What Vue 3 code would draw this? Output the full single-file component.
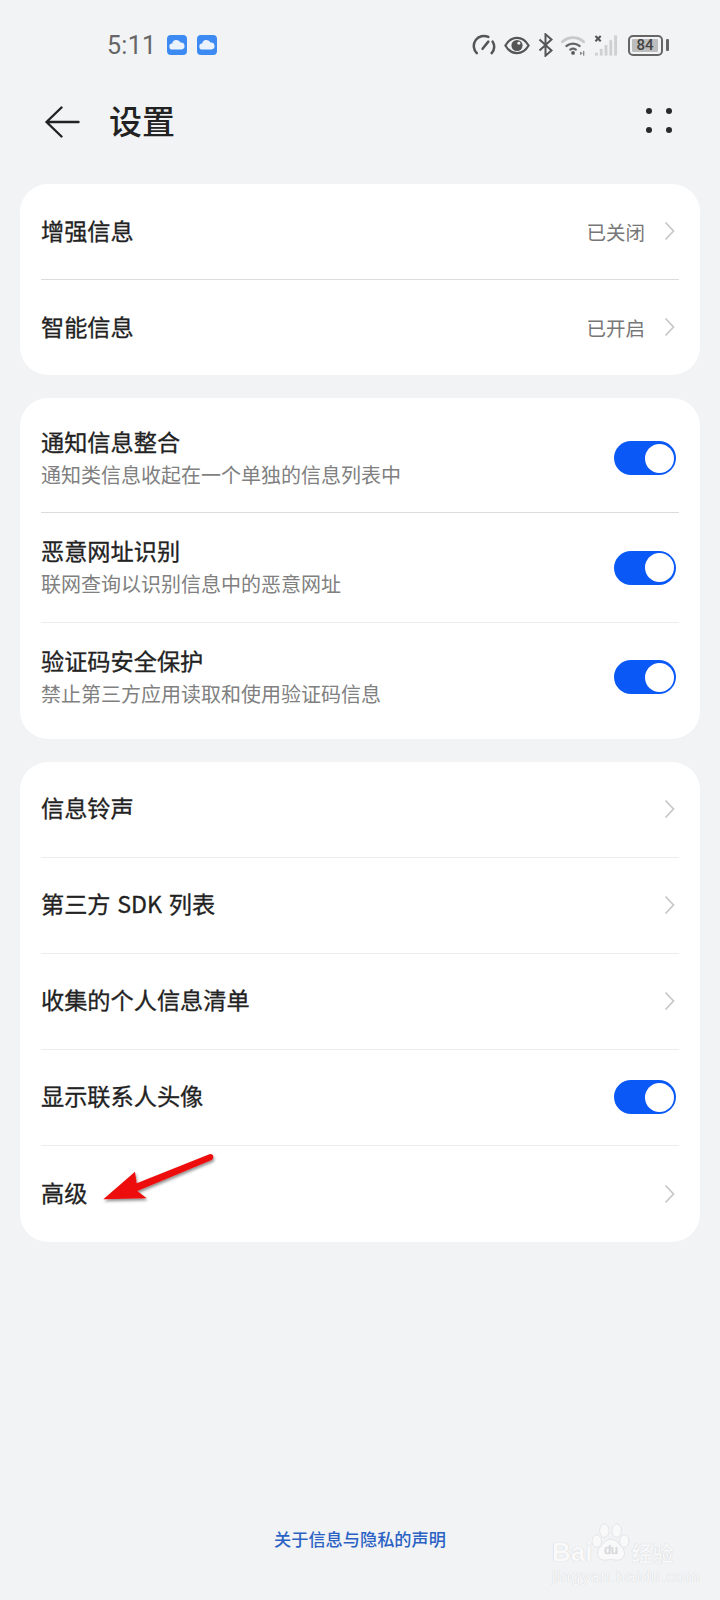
<script setup>
const basicRows = [
  { title: '增强信息', value: '已关闭' },
  { title: '智能信息', value: '已开启' },
]
const toggleRows = [
  { title: '通知信息整合', sub: '通知类信息收起在一个单独的信息列表中' },
  { title: '恶意网址识别', sub: '联网查询以识别信息中的恶意网址' },
  { title: '验证码安全保护', sub: '禁止第三方应用读取和使用验证码信息' },
]
const moreRows = [
  { title: '信息铃声', type: 'link' },
  { title: '第三方 SDK 列表', type: 'link' },
  { title: '收集的个人信息清单', type: 'link' },
  { title: '显示联系人头像', type: 'toggle' },
  { title: '高级', type: 'link' },
]
</script>

<template>
  <div class="page">
    <div class="status">
      <div class="status-left">
        <span class="time">5:11</span>
        <svg v-for="n in 2" :key="n" class="cloud" viewBox="0 0 20 20">
          <rect width="20" height="20" rx="4" fill="#3d8bf2" />
          <path d="M5.5 14.5a3 3 0 0 1-.3-6 4.4 4.4 0 0 1 8.3-1 3.5 3.5 0 0 1 1 7z" fill="#e9f2fd" />
        </svg>
      </div>
      <div class="status-right">
        <svg class="si" width="24" height="22" viewBox="0 0 25 22" fill="none" stroke="#555" stroke-width="2.6" stroke-linecap="round">
          <path d="M5 19.5A10.5 10.5 0 0 1 17 2.6" />
          <path d="M21.5 7.5A10.5 10.5 0 0 1 20.5 19.5" />
          <path d="M11 15l6-7.5" />
        </svg>
        <svg class="si" width="26" height="19" viewBox="0 0 28 20">
          <path d="M1.5 10C5 4 9 1.8 14 1.8S23 4 26.5 10C23 16 19 18.2 14 18.2S5 16 1.5 10z" fill="none" stroke="#555" stroke-width="2.4" />
          <circle cx="14" cy="10" r="6" fill="#555" />
          <circle cx="16" cy="7.5" r="1.6" fill="#f1f3f5" />
        </svg>
        <svg class="si" width="15" height="24" viewBox="0 0 15 24" fill="none" stroke="#555" stroke-width="2">
          <path d="M1.5 6.5l12 11-6 5.2V1.3l6 5.2-12 11" />
        </svg>
        <svg class="si" width="25" height="22" viewBox="0 0 27 22" fill="none" stroke-linecap="round">
          <path d="M1.5 7.5a17 17 0 0 1 23 0" stroke="#c9c9c9" stroke-width="2.8" />
          <path d="M6 12a11 11 0 0 1 14 0" stroke="#666" stroke-width="2.6" />
          <path d="M10 16a5 5 0 0 1 6 0" stroke="#666" stroke-width="2.4" />
          <circle cx="13" cy="19.6" r="2" fill="#555" />
          <path d="M20.5 18v4l3-2z" fill="#888" />
          <path d="M24.5 18v4" stroke="#888" stroke-width="1.4" />
        </svg>
        <svg class="si" width="24" height="23" viewBox="0 0 25 23" fill="none">
          <path d="M1.5 1.5l5.5 5.5M7 1.5l-5.5 5.5" stroke="#555" stroke-width="2.2" />
          <g fill="#d0d0d0">
            <rect x="1" y="19" width="3" height="3" />
            <rect x="6" y="15" width="3" height="7" />
            <rect x="11" y="11" width="3" height="11" />
            <rect x="16" y="6" width="3" height="16" />
            <rect x="21" y="1" width="3" height="21" />
          </g>
        </svg>
        <div class="battery">
          <div class="battery-body">
            <span class="battery-fill">84</span>
          </div>
          <span class="battery-cap"></span>
        </div>
      </div>
    </div>

    <header class="header">
      <svg class="back" width="36" height="32" viewBox="0 0 36 32" fill="none" stroke="#222" stroke-width="2.4" stroke-linecap="round" stroke-linejoin="round">
        <path d="M16.5 1.5L1.5 16l15 14.5M1.5 16h32" />
      </svg>
      <h1 class="title">设置</h1>
      <div class="more">
        <i v-for="n in 4" :key="n"></i>
      </div>
    </header>

    <main class="cards">
      <section class="card">
        <div v-for="r in basicRows" :key="r.title" class="row">
          <span class="row-title">{{ r.title }}</span>
          <span class="value">{{ r.value }}</span>
          <svg class="chev" width="11" height="20" viewBox="0 0 11 20" fill="none" stroke="#c8c8c8" stroke-width="1.8"><path d="M1.5 1.5l8 8.5-8 8.5" /></svg>
        </div>
      </section>

      <section class="card tall">
        <div v-for="r in toggleRows" :key="r.title" class="row double">
          <div class="stack">
            <span class="row-title">{{ r.title }}</span>
            <span class="sub">{{ r.sub }}</span>
          </div>
          <span class="switch"><i></i></span>
        </div>
      </section>

      <section class="card soft">
        <div v-for="r in moreRows" :key="r.title" class="row wide">
          <span class="row-title">{{ r.title }}</span>
          <span v-if="r.type === 'toggle'" class="switch"><i></i></span>
          <svg v-else class="chev" width="11" height="20" viewBox="0 0 11 20" fill="none" stroke="#c8c8c8" stroke-width="1.8"><path d="M1.5 1.5l8 8.5-8 8.5" /></svg>
        </div>
      </section>
    </main>

    <footer class="footer">关于信息与隐私的声明</footer>

    <svg class="arrow" width="130" height="70" viewBox="0 0 130 70">
      <defs>
        <filter id="arrowShadow" x="-20%" y="-20%" width="140%" height="150%">
          <feDropShadow dx="1" dy="2" stdDeviation="1.5" flood-color="#000" flood-opacity="0.45" />
        </filter>
      </defs>
      <path d="M4.3 56.3L36 28.7 37.7 40.3 111 11Q114.3 11 114.3 13.7 114.3 16 112.7 17L38.3 48 47.7 55.3z" fill="#ee1111" filter="url(#arrowShadow)" />
    </svg>

    <div class="watermark">
      <div class="wm-top">
        <span class="wm-bai">Bai</span>
        <svg class="wm-paw" width="38" height="42" viewBox="0 0 40 42">
          <g fill="#f9f9fa" stroke="#dcdde0" stroke-width="0.7">
            <ellipse cx="13" cy="8" rx="5" ry="7" />
            <ellipse cx="26" cy="8" rx="5" ry="7" />
            <ellipse cx="5" cy="19" rx="5" ry="6.5" />
            <ellipse cx="34" cy="19" rx="5" ry="6.5" />
            <path d="M20 17c6 0 8 5 12 9 5 6 1 14-6 13-3 0-4-1-6-1s-3 1-6 1C7 40 3 32 8 26c4-4 6-9 12-9z" />
          </g>
          <text x="20" y="33" text-anchor="middle" class="wm-du">du</text>
        </svg>
        <span class="wm-cn">经验</span>
      </div>
      <div class="wm-url">jingyan.baidu.com</div>
    </div>
  </div>
</template>

<style>
body { background: #f1f3f5; }
</style>

<style scoped>
.page {
  position: relative;
  width: 720px;
  height: 1600px;
  overflow: hidden;
  display: flex;
  flex-direction: column;
  background: #f1f3f5;
  font-family: "Noto Sans CJK SC", "Noto Sans", sans-serif;
  color: #222;
}
.status {
  height: 70px;
  padding: 20px 51px 0 107px;
  box-sizing: border-box;
  display: flex;
  align-items: center;
  justify-content: space-between;
}
.status-left { display: flex; align-items: center; gap: 10px; }
.time {
  font-family: Roboto, "Noto Sans", sans-serif;
  font-size: 25px;
  color: #666;
  margin-right: 1px;
  letter-spacing: 0.3px;
}
.cloud { width: 20px; height: 20px; }
.status-right { display: flex; align-items: center; gap: 8px; }
.si { display: block; }
.battery { display: flex; align-items: center; gap: 3px; margin-left: 2px; }
.battery-body {
  width: 35px;
  height: 21px;
  box-sizing: border-box;
  border: 2px solid #666;
  border-radius: 5px;
  padding: 2px;
  display: flex;
}
.battery-fill {
  width: 26px;
  background: #bdbdbd;
  border-radius: 1px;
  font-family: Roboto, sans-serif;
  font-size: 15px;
  font-weight: 500;
  line-height: 13px;
  color: #444;
  text-align: center;
}
.battery-cap { width: 3px; height: 12px; background: #666; border-radius: 1px; }

.header {
  height: 104px;
  padding: 0 48px 0 45px;
  box-sizing: border-box;
  display: flex;
  align-items: center;
}
.back { margin-right: 28px; }
.title { margin: 0 0 4px; font-size: 33px; font-weight: 500; line-height: 1; color: #222; }
.more {
  margin: 0 0 3px auto;
  display: grid;
  grid-template-columns: 6px 6px;
  gap: 13px 14px;
}
.more i { width: 6px; height: 6px; border-radius: 50%; background: #2a2a2a; }

.cards {
  padding: 10px 20px 0;
  display: flex;
  flex-direction: column;
  gap: 23px;
}
.card { background: #fff; border-radius: 28px; padding: 0 21px; }
.card.tall { padding-top: 6px; padding-bottom: 6.5px; }
.row {
  height: 95.5px;
  box-sizing: border-box;
  display: flex;
  align-items: center;
  border-bottom: 1px solid #dcdcdc;
}
.row:last-child { border-bottom: 0; }
.row.wide { height: 96px; }
.row.double { height: 109.4px; }
.row.double + .row.double { border-bottom-color: #ececec; }
.row.double:last-child { border-bottom: 0; }
.soft .row { border-bottom-color: #ececec; }
.soft .row:last-child { border-bottom: 0; }
.stack { display: flex; flex-direction: column; gap: 5px; margin-bottom: 2px; }
.row-title {
  font-size: 23.2px;
  font-weight: 400;
  -webkit-text-stroke: 0.3px #222;
  word-spacing: 1.5px;
  line-height: 30px;
  color: #222;
  margin-right: auto;
  padding-bottom: 2px;
}
.row.wide .row-title { padding-bottom: 4px; }
.stack .row-title { margin: 0; padding: 0; }
.sub { font-size: 20px; line-height: 28px; color: #808080; }
.value { font-size: 19.5px; color: #777; margin-right: 19px; }
.chev { margin-right: 4px; }
.switch {
  width: 62px;
  height: 34px;
  margin-left: auto;
  margin-right: 3px;
  box-sizing: border-box;
  padding: 2.5px;
  border-radius: 17px;
  background: #0a59f7;
  display: flex;
  justify-content: flex-end;
}
.switch i { width: 29px; height: 29px; border-radius: 50%; background: #fff; }

.footer {
  position: absolute;
  left: 0;
  right: 0;
  bottom: 49px;
  text-align: center;
  font-size: 17.2px;
  font-weight: 500;
  line-height: 24px;
  color: #2a62c4;
}
.arrow { position: absolute; left: 99px; top: 1143px; }
.watermark {
  position: absolute;
  left: 552px;
  top: 1520px;
  width: 130px;
  color: #f9f9fa;
  text-shadow: 0 0 1px #c4c5c9;
}
.wm-top { display: flex; align-items: flex-end; height: 46px; }
.wm-bai { font-family: "Liberation Sans", sans-serif; font-size: 26px; font-weight: 700; line-height: 28px; }
.wm-paw { margin: 0 0 2px 0; flex: none; }
.wm-du { font-family: "Liberation Sans", sans-serif; font-size: 13px; fill: #d8dade; }
.wm-cn { font-size: 21px; font-weight: 500; line-height: 28px; margin-left: 1px; white-space: nowrap; }
.wm-url { font-family: "Liberation Sans", sans-serif; font-size: 16.5px; line-height: 20px; letter-spacing: 0.9px; white-space: nowrap; }
</style>
